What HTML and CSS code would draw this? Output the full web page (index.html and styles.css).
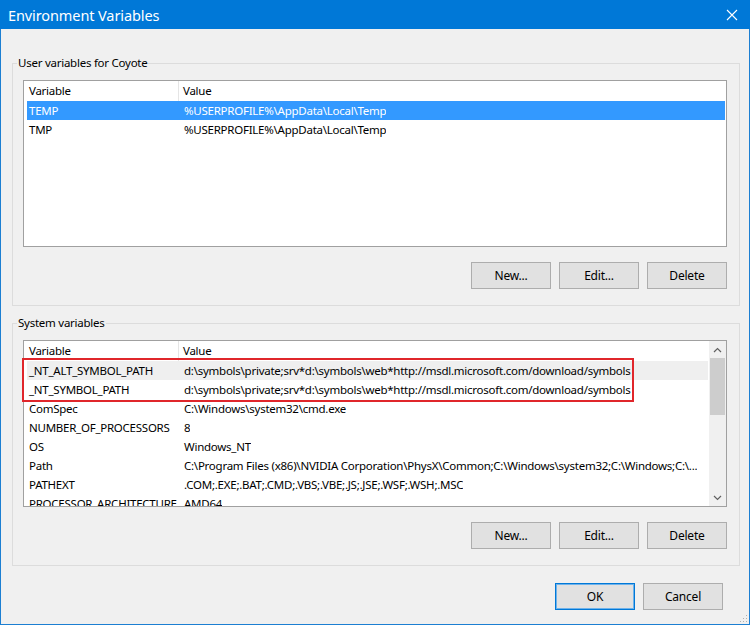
FILE: index.html
```html
<!DOCTYPE html>
<html>
<head>
<meta charset="utf-8">
<title>Environment Variables</title>
<link rel="stylesheet" href="styles.css">
</head>
<body>
<div class="window">
  <div class="titlebar">
    <span class="title">Environment Variables</span>
    <svg class="close" width="12" height="12" viewBox="0 0 12 12"><path d="M1 1 L11 11 M11 1 L1 11" stroke="#fff" stroke-width="1.1" fill="none"/></svg>
  </div>
  <div class="client">
    <fieldset class="group">
      <legend>User variables for Coyote</legend>
      <div class="list">
        <div class="rows">
          <div class="header">
            <div class="hcell hvar">Variable</div>
            <div class="hcell hval">Value</div>
          </div>
          <div class="row selected"><div class="cvar">TEMP</div><div class="cval">%USERPROFILE%\AppData\Local\Temp</div></div>
          <div class="row"><div class="cvar">TMP</div><div class="cval">%USERPROFILE%\AppData\Local\Temp</div></div>
        </div>
      </div>
      <div class="buttons">
        <button class="btn">New...</button>
        <button class="btn">Edit...</button>
        <button class="btn">Delete</button>
      </div>
    </fieldset>

    <fieldset class="group second">
      <legend>System variables</legend>
      <div class="list sys">
        <div class="rows">
          <div class="header">
            <div class="hcell hvar">Variable</div>
            <div class="hcell hval">Value</div>
          </div>
          <div class="row inactive"><div class="cvar">_NT_ALT_SYMBOL_PATH</div><div class="cval">d:\symbols\private;srv*d:\symbols\web*http://msdl.microsoft.com/download/symbols</div></div>
          <div class="row"><div class="cvar">_NT_SYMBOL_PATH</div><div class="cval">d:\symbols\private;srv*d:\symbols\web*http://msdl.microsoft.com/download/symbols</div></div>
          <div class="row"><div class="cvar">ComSpec</div><div class="cval">C:\Windows\system32\cmd.exe</div></div>
          <div class="row"><div class="cvar">NUMBER_OF_PROCESSORS</div><div class="cval">8</div></div>
          <div class="row"><div class="cvar">OS</div><div class="cval">Windows_NT</div></div>
          <div class="row"><div class="cvar">Path</div><div class="cval">C:\Program Files (x86)\NVIDIA Corporation\PhysX\Common;C:\Windows\system32;C:\Windows;C:\...</div></div>
          <div class="row"><div class="cvar">PATHEXT</div><div class="cval">.COM;.EXE;.BAT;.CMD;.VBS;.VBE;.JS;.JSE;.WSF;.WSH;.MSC</div></div>
          <div class="row"><div class="cvar">PROCESSOR_ARCHITECTURE</div><div class="cval">AMD64</div></div>
        </div>
        <div class="scrollbar">
          <div class="sbtn"><svg width="9" height="6" viewBox="0 0 9 6"><path d="M1 5 L4.5 1.5 L8 5" stroke="#606060" stroke-width="1.2" fill="none"/></svg></div>
          <div class="track"><div class="thumb"></div></div>
          <div class="sbtn"><svg width="9" height="6" viewBox="0 0 9 6"><path d="M1 1 L4.5 4.5 L8 1" stroke="#606060" stroke-width="1.2" fill="none"/></svg></div>
        </div>
        <div class="callout"></div>
      </div>
      <div class="buttons">
        <button class="btn">New...</button>
        <button class="btn">Edit...</button>
        <button class="btn">Delete</button>
      </div>
    </fieldset>

    <div class="dialog-buttons">
      <button class="btn default">OK</button>
      <button class="btn">Cancel</button>
    </div>
    <svg class="grip" width="8" height="8" viewBox="0 0 8 8">
      <rect x="6" y="0" width="1" height="1" fill="#b0b0b0"/>
      <rect x="3" y="3" width="1" height="1" fill="#b0b0b0"/>
      <rect x="6" y="3" width="1" height="1" fill="#b0b0b0"/>
      <rect x="0" y="6" width="1" height="1" fill="#b0b0b0"/>
      <rect x="3" y="6" width="1" height="1" fill="#b0b0b0"/>
      <rect x="6" y="6" width="1" height="1" fill="#b0b0b0"/>
    </svg>
  </div>
</div>
</body>
</html>
```

FILE: styles.css
```css
* { box-sizing: border-box; }

html, body {
  margin: 0;
  padding: 0;
  background: #f0f0f0;
}

body {
  font-family: "Noto Sans", "Open Sans", sans-serif;
  font-size: 11.5px;
  letter-spacing: -0.25px;
  color: #000;
}

.window {
  width: 750px;
  height: 625px;
  display: flex;
  flex-direction: column;
}

.titlebar {
  height: 29px;
  flex: 0 0 29px;
  background: #0078d7;
  color: #fff;
  display: flex;
  align-items: center;
  justify-content: space-between;
  padding: 0 12px 0 8px;
}

.title {
  font-size: 14.5px;
  letter-spacing: -0.1px;
  line-height: 20px;
}

.close {
  display: block;
}

.client {
  position: relative;
  flex: 1;
  background: #f0f0f0;
  border: 1px solid #1c7fd2;
  border-top: 0;
  padding: 26px 0 0 11px;
}

.group {
  width: 728px;
  min-width: 0;
  margin: 0;
  border: 1px solid #dcdcdc;
  padding: 9px 12px 16px 10px;
}

.group.second {
  margin-top: 9px;
}

.group legend {
  margin-left: -6px;
  padding: 0 1px;
  line-height: 16px;
  height: 16px;
}

.list {
  position: relative;
  height: 167px;
  background: #fff;
  border: 1px solid #a0a0a0;
  display: flex;
}

.rows {
  flex: 1;
  overflow: hidden;
  min-width: 0;
}

.header {
  height: 20px;
  display: flex;
  line-height: 20px;
}

.hcell {
  white-space: nowrap;
}

.hvar {
  width: 155px;
  padding-left: 5px;
  border-right: 1px solid #e5e5e5;
}

.hval {
  padding-left: 4px;
}

.row {
  height: 19px;
  line-height: 19px;
  display: flex;
  margin: 0 1px 0 3px;
  white-space: nowrap;
}

.row.selected {
  background: #3399ff;
  color: #fff;
}

.row.inactive {
  background: #efefef;
}

.cvar {
  width: 150px;
  flex: 0 0 150px;
  margin-right: 3px;
  padding-left: 2px;
  overflow: hidden;
}

.cval {
  padding-left: 4px;
  overflow: hidden;
  min-width: 0;
}

.scrollbar {
  width: 17px;
  flex: 0 0 17px;
  background: #f0f0f0;
  display: flex;
  flex-direction: column;
}

.sbtn {
  height: 17px;
  flex: 0 0 17px;
  display: flex;
  align-items: center;
  justify-content: center;
}

.sbtn svg { display: block; }

.track {
  flex: 1;
  padding: 0 1px;
}

.thumb {
  height: 57px;
  background: #cdcdcd;
}

.callout {
  position: absolute;
  left: -2px;
  top: 17px;
  width: 612px;
  height: 44px;
  border: 2px solid #e0262b;
}

.buttons {
  display: flex;
  justify-content: flex-end;
  gap: 8px;
  margin-top: 15px;
}

.btn {
  width: 80px;
  height: 27px;
  padding: 0;
  margin: 0;
  background: #e1e1e1;
  border: 1px solid #adadad;
  font-family: inherit;
  font-size: 12px;
  letter-spacing: -0.2px;
  color: #000;
}

.dialog-buttons {
  display: flex;
  justify-content: flex-end;
  gap: 8px;
  margin-top: 17px;
  padding-right: 26px;
}

.btn.default {
  border: 1px solid #0078d7;
  box-shadow: inset 0 0 0 1px #6fb2ea;
}

.grip {
  position: absolute;
  right: 1px;
  bottom: 1px;
  display: block;
}
```
